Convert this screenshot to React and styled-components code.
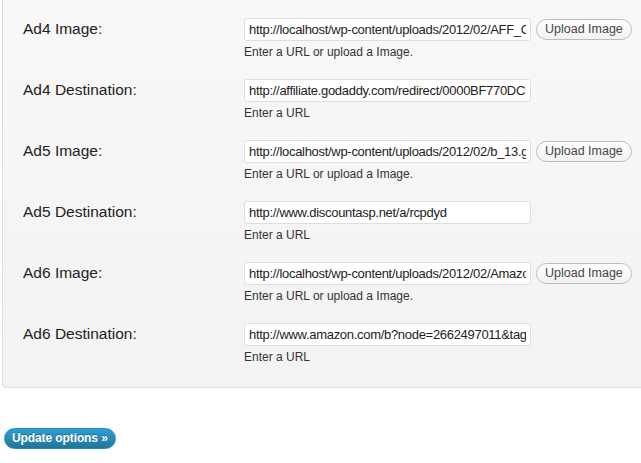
import React from "react";
import styled, { createGlobalStyle } from "styled-components";

const Global = createGlobalStyle`
  html, body { margin: 0; padding: 0; overflow: hidden; background: #fff; }
  body { font-family: "Liberation Sans", Arial, sans-serif; }
`;

const Page = styled.div`
  width: 641px;
  height: 463px;
  padding-left: 2px;
  box-sizing: border-box;
`;

const Panel = styled.div`
  width: 650px;
  box-sizing: border-box;
  border: 1px solid #dfdfdf;
  border-top: none;
  border-radius: 0 0 4px 4px;
  background: linear-gradient(#f8f8f8, #f3f3f3);
  padding: 8px 0 13px;
`;

const Row = styled.div`
  display: grid;
  grid-template-columns: 241px 1fr;
  padding: 10px 0 9px;
`;

const Label = styled.div`
  padding: 0 0 0 20px;
  margin-top: -1px;
  font-size: 15.5px;
  line-height: 23px;
  color: #222;
`;

const Field = styled.div`
  display: flex;
  flex-direction: column;
`;

const InputLine = styled.div`
  display: flex;
  align-items: flex-start;
  gap: 5px;
`;

const TextInput = styled.input`
  width: 287px;
  height: 23px;
  box-sizing: border-box;
  border: 1px solid #dfdfdf;
  border-radius: 3px;
  background: #fff;
  padding: 0 4px;
  font-family: "Liberation Sans", Arial, sans-serif;
  font-size: 13px;
  letter-spacing: -0.3px;
  color: #222;
  outline: none;
`;

const UploadButton = styled.button`
  margin-top: 1px;
  height: 21px;
  box-sizing: border-box;
  padding: 0 8px;
  border: 1px solid #bbb;
  border-radius: 11px;
  background: linear-gradient(#fefefe, #f2f2f2);
  font-family: "Liberation Sans", Arial, sans-serif;
  font-size: 12.5px;
  color: #464646;
  line-height: 19px;
  cursor: pointer;
`;

const Hint = styled.div`
  margin-top: 4px;
  font-size: 12px;
  line-height: 15px;
  color: #333;
`;

const Footer = styled.div`
  padding: 40px 0 0 2px;
`;

const SubmitButton = styled.button`
  height: 21px;
  box-sizing: border-box;
  padding: 0 7px;
  border: 1px solid #298cba;
  border-radius: 11px;
  background: linear-gradient(#2e9fd2, #21759b);
  font-family: "Liberation Sans", Arial, sans-serif;
  font-weight: bold;
  font-size: 12px;
  letter-spacing: -0.1px;
  line-height: 19px;
  color: #fff;
  text-shadow: 0 -1px 0 rgba(0, 0, 0, 0.3);
  cursor: pointer;
`;

const rows = [
  { label: "Ad4 Image:", value: "http://localhost/wp-content/uploads/2012/02/AFF_GD_468x60.gif", image: true },
  { label: "Ad4 Destination:", value: "http://affiliate.godaddy.com/redirect/0000BF770DCF3A1B", image: false },
  { label: "Ad5 Image:", value: "http://localhost/wp-content/uploads/2012/02/b_13.gif", image: true },
  { label: "Ad5 Destination:", value: "http://www.discountasp.net/a/rcpdyd", image: false },
  { label: "Ad6 Image:", value: "http://localhost/wp-content/uploads/2012/02/Amazon.gif", image: true },
  { label: "Ad6 Destination:", value: "http://www.amazon.com/b?node=2662497011&tag=abc", image: false },
];

export default function App() {
  return (
    <Page>
      <Global />
      <Panel>
        {rows.map((r) => (
          <Row key={r.label}>
            <Label>{r.label}</Label>
            <Field>
              <InputLine>
                <TextInput type="text" defaultValue={r.value} />
                {r.image && <UploadButton type="button">Upload Image</UploadButton>}
              </InputLine>
              <Hint>{r.image ? "Enter a URL or upload a Image." : "Enter a URL"}</Hint>
            </Field>
          </Row>
        ))}
      </Panel>
      <Footer>
        <SubmitButton type="button">Update options »</SubmitButton>
      </Footer>
    </Page>
  );
}
